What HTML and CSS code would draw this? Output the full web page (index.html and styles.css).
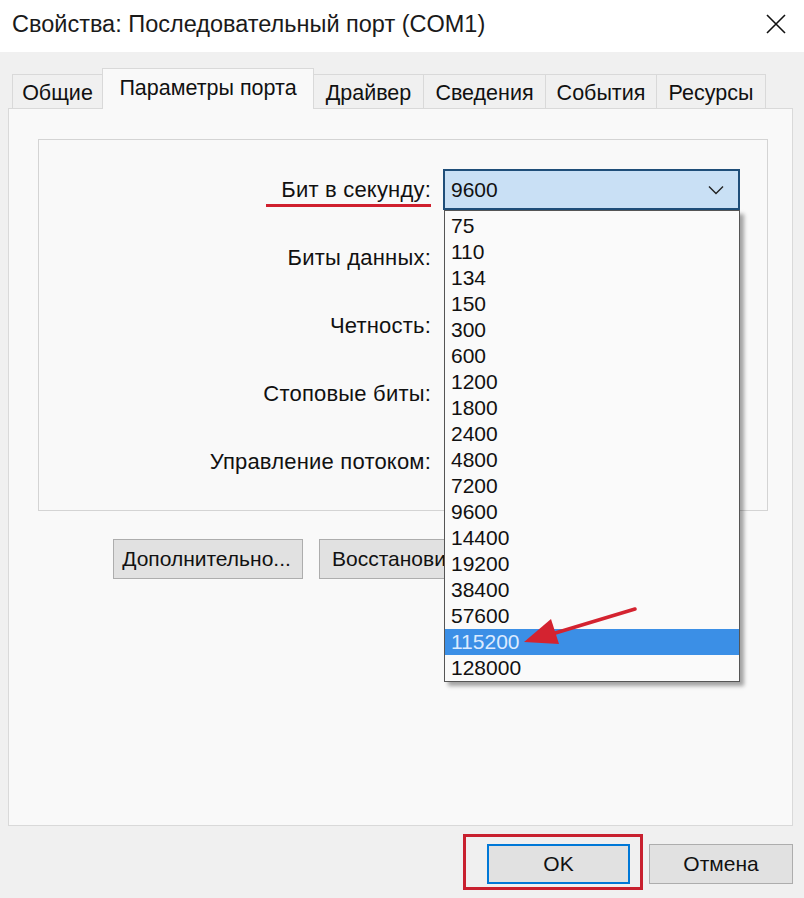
FILE: index.html
```html
<!DOCTYPE html>
<html lang="ru">
<head>
  <meta charset="UTF-8">
  <title>Свойства: Последовательный порт (COM1)</title>
  <link rel="stylesheet" href="styles.css">
</head>
<body>
<div class="window">

  <div class="titlebar">
    <span class="title">Свойства: Последовательный порт (COM1)</span>
    <svg class="close" width="20" height="20" viewBox="0 0 20 20">
      <path d="M1 1 L19 19 M19 1 L1 19" stroke="#111" stroke-width="1.6" fill="none"/>
    </svg>
  </div>

  <div class="main">
    <div class="tabs">
      <div class="tab t1">Общие</div>
      <div class="tab t2 active">Параметры порта</div>
      <div class="tab t3">Драйвер</div>
      <div class="tab t4">Сведения</div>
      <div class="tab t5">События</div>
      <div class="tab t6">Ресурсы</div>
    </div>

    <div class="panel">
      <div class="group">
        <label><span class="mark">Бит в секунду:</span></label>
        <div class="field">
          <div class="combo focus">
            <span>9600</span>
            <svg width="16" height="10" viewBox="0 0 16 10"><path d="M1 1.5 L8 8.5 L15 1.5" stroke="#222" stroke-width="1.4" fill="none"/></svg>
          </div>
          <ul class="dropdown">
            <li>75</li>
            <li>110</li>
            <li>134</li>
            <li>150</li>
            <li>300</li>
            <li>600</li>
            <li>1200</li>
            <li>1800</li>
            <li>2400</li>
            <li>4800</li>
            <li>7200</li>
            <li>9600</li>
            <li>14400</li>
            <li>19200</li>
            <li>38400</li>
            <li>57600</li>
            <li class="selected">115200</li>
            <li>128000</li>
          </ul>
        </div>

        <!-- остальные списки закрыты раскрытым списком -->
        <label>Биты данных:</label>
        <div class="field"></div>

        <label>Четность:</label>
        <div class="field"></div>

        <label>Стоповые биты:</label>
        <div class="field"></div>

        <label>Управление потоком:</label>
        <div class="field"></div>
      </div>

      <div class="actions">
        <button class="btn adv">Дополнительно...</button>
        <button class="btn restore">Восстановить умолчания</button>
      </div>
    </div>

    <div class="footer">
      <div class="highlight">
        <button class="btn ok">OK</button>
      </div>
      <button class="btn cancel">Отмена</button>
    </div>
  </div>

  <!-- стрелка-пометка поверх списка -->
  <svg class="arrow" width="120" height="50" viewBox="0 0 120 50">
    <path d="M113 2 L30 27" stroke="#d42330" stroke-width="3.5" fill="none" stroke-linecap="round"/>
    <polygon points="2,35 29,12 37,37" fill="#d42330"/>
  </svg>
</div>
</body>
</html>
```

FILE: styles.css
```css
body {
  margin: 0;
  font-family: "Liberation Sans", Arial, sans-serif;
  background: #f0f0f0;
  color: #111;
}
.window {
  position: relative;
  width: 804px;
  height: 898px;
  display: flex;
  flex-direction: column;
}
.titlebar {
  height: 52px;
  background: #fff;
  display: flex;
  align-items: center;
  justify-content: space-between;
  padding: 0 18px 4px 12px;
  box-sizing: border-box;
}
.title {
  font-size: 23.5px;
  color: #1a1a1a;
}
.main {
  padding: 16px 11px 0 8px;
}

/* вкладки */
.tabs {
  display: flex;
  align-items: flex-end;
  padding-left: 4px;
  height: 40px;
  position: relative;
  z-index: 1;
}
.tab {
  box-sizing: border-box;
  height: 34px;
  border: 1px solid #d9d9d9;
  border-bottom: none;
  border-left: none;
  background: #f0f0f0;
  font-size: 21.5px;
  text-align: center;
  line-height: 36px;
  white-space: nowrap;
}
.tab.t1 { width: 91px; border-left: 1px solid #d9d9d9; }
.tab.t2 { width: 212px; }
.tab.t3 { width: 110px; }
.tab.t4 { width: 122px; }
.tab.t5 { width: 111px; }
.tab.t6 { width: 109px; }
.tab.active {
  height: 41px;
  margin-bottom: -1px;
  background: #f9f9f9;
  border-left: 1px solid #d9d9d9;
  line-height: 38px;
  margin-left: -1px;
}

.panel {
  height: 718px;
  box-sizing: border-box;
  border: 1px solid #d9d9d9;
  background: #f9f9f9;
  padding: 30px 24px 0 29px;
}
.group {
  border: 1px solid #d4d4d4;
  display: grid;
  grid-template-columns: 1fr 297px;
  grid-auto-rows: 41px;
  row-gap: 27px;
  column-gap: 12px;
  padding: 29px 27px 28px 0;
}
.group label {
  font-size: 22px;
  letter-spacing: 0.2px;
  text-align: right;
  align-self: center;
  color: #111;
  white-space: nowrap;
}
.mark {
  padding-left: 15px;
  padding-bottom: 2px;
  border-bottom: 3px solid #d0202e;
}
.field {
  position: relative;
}
.combo {
  box-sizing: border-box;
  height: 41px;
  border: 2px solid #1f4e79;
  background: #c9e0f5;
  font-size: 21px;
  padding: 0 14px 0 6px;
  display: flex;
  align-items: center;
  justify-content: space-between;
}
.dropdown {
  position: absolute;
  top: 41px;
  left: 1px;
  width: 296px;
  box-sizing: border-box;
  margin: 0;
  padding: 2px 0 0;
  list-style: none;
  background: #fafafa;
  border: 1px solid #555;
  box-shadow: 4px 4px 4px rgba(0, 0, 0, 0.35);
  z-index: 2;
}
.dropdown li {
  height: 26px;
  line-height: 26px;
  font-size: 21px;
  padding-left: 6px;
}
.dropdown li.selected {
  background: #3b8fe6;
  color: #dcebff;
}

.actions {
  display: flex;
  gap: 16px;
  margin-top: 28px;
  padding-left: 75px;
}
.btn {
  font-family: "Liberation Sans", Arial, sans-serif;
  font-size: 21px;
  height: 40px;
  background: #e1e1e1;
  border: 1px solid #adadad;
  color: #111;
  padding: 0 6px;
  white-space: nowrap;
}
.btn.adv {
  width: 190px;
  padding-left: 3px;
}
/* кнопка уходит под раскрытый список */
.btn.restore {
  width: 125px;
  overflow: hidden;
  text-align: left;
  padding-left: 12px;
  border-right: none;
}

.footer {
  display: flex;
  justify-content: flex-end;
  align-items: flex-start;
  padding: 8px 0 0;
  gap: 6px;
}
.highlight {
  border: 3px solid #c8202f;
  padding: 7px 10px 3px 21px;
}
.btn.ok {
  width: 143px;
  border: 2px solid #0078d7;
  display: block;
}
.btn.cancel {
  width: 144px;
  margin-top: 10px;
}

.arrow {
  position: absolute;
  left: 522px;
  top: 607px;
  z-index: 3;
}
```
